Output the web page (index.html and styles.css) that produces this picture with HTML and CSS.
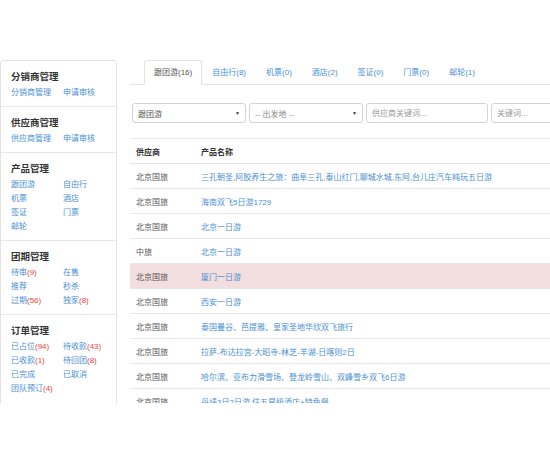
FILE: index.html
```html
<!DOCTYPE html>
<html lang="zh-CN">
<head>
    <meta charset="UTF-8">
    <title>产品列表</title>
    <link rel="stylesheet" href="styles.css">
</head>
<body>
    <div class="page">
        <div class="sidebar">
            <div class="side-group">
                <h3>分销商管理</h3>
                <div class="links">
                    <a href="#">分销商管理</a>
                    <a href="#">申请审核</a>
                </div>
            </div>
            <div class="side-group">
                <h3>供应商管理</h3>
                <div class="links">
                    <a href="#">供应商管理</a>
                    <a href="#">申请审核</a>
                </div>
            </div>
            <div class="side-group">
                <h3>产品管理</h3>
                <div class="links">
                    <a href="#">跟团游</a>
                    <a href="#">自由行</a>
                    <a href="#">机票</a>
                    <a href="#">酒店</a>
                    <a href="#">签证</a>
                    <a href="#">门票</a>
                    <a href="#">邮轮</a>
                </div>
            </div>
            <div class="side-group">
                <h3>团期管理</h3>
                <div class="links">
                    <a href="#">待审<span class="num">(9)</span></a>
                    <a href="#">在售</a>
                    <a href="#">推荐</a>
                    <a href="#">秒杀</a>
                    <a href="#">过期<span class="num">(56)</span></a>
                    <a href="#">独家<span class="num">(8)</span></a>
                </div>
            </div>
            <div class="side-group">
                <h3>订单管理</h3>
                <div class="links">
                    <a href="#">已占位<span class="num">(94)</span></a>
                    <a href="#">待收款<span class="num">(43)</span></a>
                    <a href="#">已收款<span class="num">(1)</span></a>
                    <a href="#">待回团<span class="num">(8)</span></a>
                    <a href="#">已完成</a>
                    <a href="#">已取消</a>
                    <a href="#">团队预订<span class="num">(4)</span></a>
                </div>
            </div>
        </div>

        <div class="main">
            <ul class="tabs">
                <li class="active"><a href="#">跟团游(16)</a></li>
                <li><a href="#">自由行(8)</a></li>
                <li><a href="#">机票(0)</a></li>
                <li><a href="#">酒店(2)</a></li>
                <li><a href="#">签证(0)</a></li>
                <li><a href="#">门票(0)</a></li>
                <li><a href="#">邮轮(1)</a></li>
            </ul>

            <div class="filters">
                <div class="select"><span>跟团游</span><span class="caret">▼</span></div>
                <div class="select muted"><span>-- 出发地 --</span><span class="caret">▼</span></div>
                <input type="text" placeholder="供应商关键词...">
                <input type="text" placeholder="关键词...">
            </div>

            <table class="list">
                <thead>
                    <tr><th class="col-sup">供应商</th><th>产品名称</th></tr>
                </thead>
                <tbody>
                    <tr><td>北京国旅</td><td><a href="#">三孔朝圣,阿胶养生之旅：曲阜三孔,泰山红门,聊城水城,东阿,台儿庄汽车纯玩五日游</a></td></tr>
                    <tr><td>北京国旅</td><td><a href="#">海南双飞5日游1729</a></td></tr>
                    <tr><td>北京国旅</td><td><a href="#">北京一日游</a></td></tr>
                    <tr><td>中旅</td><td><a href="#">北京一日游</a></td></tr>
                    <tr class="danger"><td>北京国旅</td><td><a href="#">厦门一日游</a></td></tr>
                    <tr><td>北京国旅</td><td><a href="#">西安一日游</a></td></tr>
                    <tr><td>北京国旅</td><td><a href="#">泰国曼谷、芭提雅、皇家圣地华欣双飞旅行</a></td></tr>
                    <tr><td>北京国旅</td><td><a href="#">拉萨-布达拉宫-大昭寺-林芝-羊湖-日喀则2日</a></td></tr>
                    <tr><td>北京国旅</td><td><a href="#">哈尔滨、亚布力滑雪场、登龙岭雪山、双峰雪乡双飞6日游</a></td></tr>
                    <tr><td>北京国旅</td><td><a href="#">丹靖3日2日游 住五星级酒店+特色餐</a></td></tr>
                </tbody>
            </table>
        </div>
    </div>
</body>
</html>
```

FILE: styles.css
```css
body {
    margin: 0;
    font-family: "Liberation Sans", "Noto Sans CJK SC", sans-serif;
    font-size: 8px;
    color: #333;
    background: #fff;
}
a {
    color: #4a8fd4;
    text-decoration: none;
}
.page {
    display: flex;
    width: 550px;
    height: 403px;
    padding-top: 60px;
    box-sizing: border-box;
    overflow: hidden;
}
.sidebar {
    width: 117px;
    flex-shrink: 0;
    border: 1px solid #e3e3e3;
    border-radius: 3px 3px 0 0;
    box-sizing: border-box;
    align-self: flex-start;
    min-height: 400px;
}
.side-group {
    padding: 9px 10px 6px;
    border-top: 1px solid #e8e8e8;
}
.side-group:first-child {
    border-top: none;
}
.side-group h3 {
    margin: 0 0 2px;
    font-size: 9.5px;
    line-height: 14px;
    font-weight: bold;
    color: #333;
}
.links {
    display: grid;
    grid-template-columns: 52px 52px;
    line-height: 14px;
}
.links a {
    white-space: nowrap;
}
.num {
    color: #f0413c;
}
.main {
    flex: 1;
    margin-left: 13px;
    overflow: hidden;
}
.tabs {
    display: flex;
    margin: 0;
    padding: 0 0 0 14px;
    list-style: none;
    border-bottom: 1px solid #e3e3e3;
}
.tabs li {
    margin-bottom: -1px;
}
.tabs a {
    display: block;
    padding: 0 9px;
    line-height: 23px;
    border: 1px solid transparent;
    border-radius: 3px 3px 0 0;
    white-space: nowrap;
}
.tabs .active a {
    color: #555;
    background: #fff;
    border-color: #e3e3e3 #e3e3e3 #fff;
}
.filters {
    display: flex;
    gap: 3px;
    margin: 18px 0 15px 2px;
}
.select, .filters input {
    flex: 0 0 114px;
    height: 20px;
    box-sizing: border-box;
    border: 1px solid #d4d4d4;
    border-radius: 3px;
    font-family: inherit;
    font-size: 8px;
    color: #555;
    padding: 0 5px;
    background: #fff;
}
.select {
    display: flex;
    align-items: center;
    justify-content: space-between;
}
.select.muted {
    color: #888;
}
.caret {
    font-size: 5px;
    color: #333;
}
.filters input::placeholder {
    color: #999;
}
.list {
    width: 100%;
    border-collapse: collapse;
}
.list th, .list td {
    height: 25px;
    padding: 0 6px;
    text-align: left;
    white-space: nowrap;
    border-top: 1px solid #e8e8e8;
    box-sizing: border-box;
}
.list th {
    font-weight: bold;
    border-bottom: 1px solid #e3e3e3;
}
.list td {
    color: #555;
}
.list .col-sup {
    width: 65px;
}
.list .danger td {
    background: #f2dede;
}
```
